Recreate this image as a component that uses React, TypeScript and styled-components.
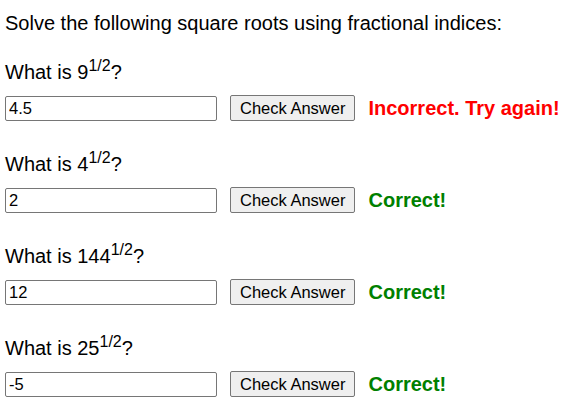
import React, { useState } from 'react';
import styled, { createGlobalStyle } from 'styled-components';

const GlobalStyle = createGlobalStyle`
    body {
        margin: 0;
        background: #ffffff;
        font-family: "Liberation Sans", Arial, sans-serif;
        color: #000000;
    }
`;

const Page = styled.div`
    padding: 12px 5px 0;
`;

const Heading = styled.p`
    margin: 0;
    font-size: 20px;
`;

const Block = styled.div`
    margin-top: 26px;

    & + & {
        margin-top: 32px;
    }
`;

const Question = styled.p`
    margin: 0 0 11px;
    font-size: 20px;
    line-height: 23px;

    sup {
        font-size: 16px;
        line-height: 0;
    }
`;

const Row = styled.div`
    display: flex;
    align-items: center;
    height: 26px;
`;

const AnswerInput = styled.input`
    box-sizing: border-box;
    width: 212px;
    height: 25px;
    margin: 0;
    padding: 1px 3px;
    font-family: "Liberation Sans", Arial, sans-serif;
    font-size: 16.5px;
    border: 1px solid #767676;
    border-radius: 2px;
`;

const CheckButton = styled.button`
    box-sizing: border-box;
    height: 26px;
    margin: 0 0 0 13px;
    padding: 1px 9px;
    font-family: "Liberation Sans", Arial, sans-serif;
    font-size: 16.5px;
    color: #000000;
    background: #efefef;
    border: 1px solid #767676;
    border-radius: 2px;
`;

const Feedback = styled.span<{ $correct: boolean }>`
    margin-left: 13px;
    font-size: 20px;
    font-weight: bold;
    color: ${({ $correct }) => ($correct ? '#008000' : '#ff0000')};
`;

interface Item {
    base: number;
    answer: string;
    correct: boolean;
}

const items: Item[] = [
    { base: 9, answer: '4.5', correct: false },
    { base: 4, answer: '2', correct: true },
    { base: 144, answer: '12', correct: true },
    { base: 25, answer: '-5', correct: true },
];

const QuestionBlock = ({ item }: { item: Item }) => {
    const [value, setValue] = useState(item.answer);
    return (
        <Block>
            <Question>What is {item.base}<sup>1/2</sup>?</Question>
            <Row>
                <AnswerInput value={value} onChange={e => setValue(e.target.value)} />
                <CheckButton>Check Answer</CheckButton>
                <Feedback $correct={item.correct}>
                    {item.correct ? 'Correct!' : 'Incorrect. Try again!'}
                </Feedback>
            </Row>
        </Block>
    );
};

const App = () => (
    <Page>
        <GlobalStyle />
        <Heading>Solve the following square roots using fractional indices:</Heading>
        {items.map(item => <QuestionBlock key={item.base} item={item} />)}
    </Page>
);

export default App;
